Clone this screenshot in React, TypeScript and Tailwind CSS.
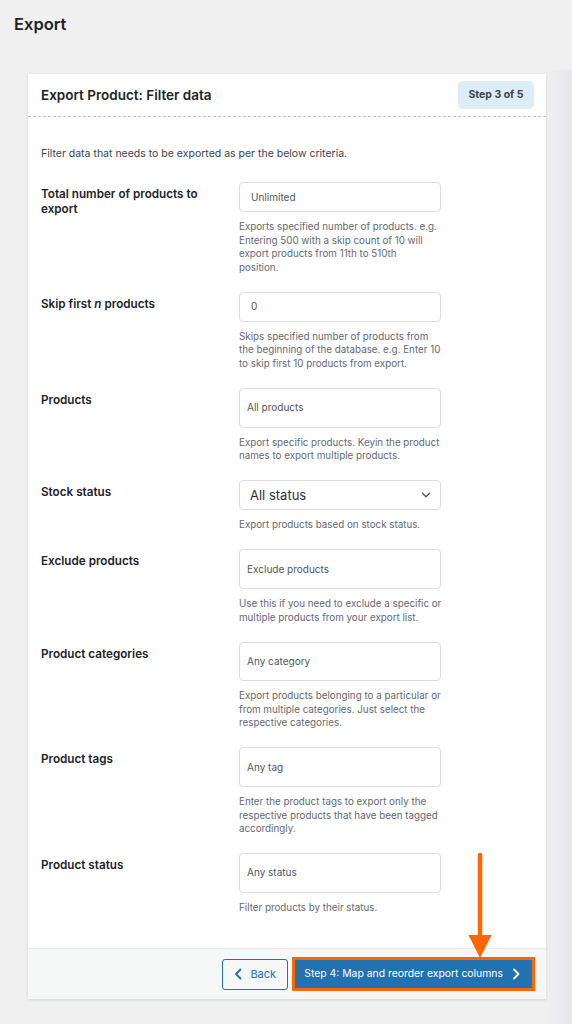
import React from "react";

type Row = {
  label: React.ReactNode;
  kind: "input" | "box" | "select";
  value: string;
  desc: string[];
};

const rows: Row[] = [
  {
    label: "Total number of products to export",
    kind: "input",
    value: "Unlimited",
    desc: [
      "Exports specified number of products. e.g.",
      "Entering 500 with a skip count of 10 will",
      "export products from 11th to 510th",
      "position.",
    ],
  },
  {
    label: (
      <>
        Skip first <em>n</em> products
      </>
    ),
    kind: "input",
    value: "0",
    desc: [
      "Skips specified number of products from",
      "the beginning of the database. e.g. Enter 10",
      "to skip first 10 products from export.",
    ],
  },
  {
    label: "Products",
    kind: "box",
    value: "All products",
    desc: ["Export specific products. Keyin the product", "names to export multiple products."],
  },
  {
    label: "Stock status",
    kind: "select",
    value: "All status",
    desc: ["Export products based on stock status."],
  },
  {
    label: "Exclude products",
    kind: "box",
    value: "Exclude products",
    desc: ["Use this if you need to exclude a specific or", "multiple products from your export list."],
  },
  {
    label: "Product categories",
    kind: "box",
    value: "Any category",
    desc: [
      "Export products belonging to a particular or",
      "from multiple categories. Just select the",
      "respective categories.",
    ],
  },
  {
    label: "Product tags",
    kind: "box",
    value: "Any tag",
    desc: [
      "Enter the product tags to export only the",
      "respective products that have been tagged",
      "accordingly.",
    ],
  },
  {
    label: "Product status",
    kind: "box",
    value: "Any status",
    desc: ["Filter products by their status."],
  },
];

function Field({ row }: { row: Row }) {
  if (row.kind === "select") {
    return (
      <div className="flex h-[30px] w-[202px] items-center justify-between rounded-[4px] border border-[#dcdcde] bg-white pl-[10px] pr-[9px]">
        <span className="text-[13px] text-[#2c3338]">{row.value}</span>
        <svg width="10" height="10" viewBox="0 0 10 10" fill="none">
          <path d="M1.5 3.2 5 6.7 8.5 3.2" stroke="#50575e" strokeWidth="1.3" strokeLinecap="round" strokeLinejoin="round" />
        </svg>
      </div>
    );
  }
  if (row.kind === "box") {
    return (
      <div className="flex h-[39.5px] w-[202px] items-center rounded-[4px] border border-[#dcdcde] bg-white pl-[7px]">
        <span className="text-[10px] text-[#50575e]">{row.value}</span>
      </div>
    );
  }
  return (
    <div className="flex h-[30px] w-[202px] items-center rounded-[4px] border border-[#dcdcde] bg-white pl-[11px]">
      <span className="text-[10px] text-[#50575e]">{row.value}</span>
    </div>
  );
}

export default function App() {
  return (
    <div
      className="flex min-h-[1024px] w-[572px] bg-[#f0f0f1]"
      style={{ fontFamily: "Inter, 'Noto Sans', sans-serif" }}
    >
      <div className="flex w-[548px] flex-col">
        <h1 className="pl-[14px] pt-[13px] text-[16.5px] font-semibold leading-[22px] text-[#1d2327]">Export</h1>

        <div className="ml-[28px] mt-[39px] w-[518px] bg-white shadow-[0_1px_3px_rgba(0,0,0,0.12)]">
          {/* header */}
          <div className="flex h-[43px] items-center justify-between border-b border-dashed border-[#c3c4c7] pl-[13px] pr-[12px]">
            <span className="text-[13.5px] font-semibold text-[#1d2327]">Export Product: Filter data</span>
            <span className="flex h-[28px] items-center rounded-[5px] bg-[#dcedf5] px-[10.5px] text-[10.5px] font-bold text-[#3c434a]">
              Step 3 of 5
            </span>
          </div>

          {/* body */}
          <div className="px-[13px] pb-[34px] pt-[30px]">
            <p className="text-[10.5px] leading-[14px] text-[#3c434a]">
              Filter data that needs to be exported as per the below criteria.
            </p>
            <div className="mt-[21px] flex flex-col gap-[17.5px]">
              {rows.map((row, i) => (
                <div key={i} className="flex">
                  <div className="w-[198px] pr-[26px] pt-[5px] text-[11.7px] font-semibold leading-[15px] text-[#1d2327]">
                    {row.label}
                  </div>
                  <div className="flex flex-col">
                    <Field row={row} />
                    <div className="mt-[8px] text-[9.8px] leading-[13.6px] text-[#646970]">
                      {row.desc.map((d, j) => (
                        <div key={j}>{d}</div>
                      ))}
                    </div>
                  </div>
                </div>
              ))}
            </div>
          </div>

          {/* footer */}
          <div className="relative flex h-[51px] items-center justify-end gap-[4px] border-t border-[#ececec] bg-[#f6f7f7] pr-[11px]">
            <button className="flex h-[31px] w-[66px] items-center justify-center gap-[7px] rounded-[3px] border border-[#2271b1] bg-[#f6f7f7] text-[11px] text-[#2271b1]">
              <svg width="9" height="12" viewBox="0 0 9 12" fill="none">
                <path d="M6.5 1.5 2 6l4.5 4.5" stroke="#2271b1" strokeWidth="1.8" strokeLinecap="round" strokeLinejoin="round" />
              </svg>
              Back
            </button>
            <div className="border-[3px] border-[#ff6600] bg-[#ff6600] p-0">
              <button className="flex h-[28px] items-center gap-[9px] bg-[#2271b1] pl-[9px] pr-[12px] text-[10.4px] text-white">
                Step 4: Map and reorder export columns
                <svg width="8" height="12" viewBox="0 0 8 12" fill="none">
                  <path d="M2 1.5 6.5 6 2 10.5" stroke="white" strokeWidth="1.8" strokeLinecap="round" strokeLinejoin="round" />
                </svg>
              </button>
            </div>
            {/* annotation arrow */}
            <svg className="absolute left-[440px] top-[-96px]" width="24" height="106" viewBox="0 0 24 106">
              <path d="M12 2 L12 84" stroke="#ff6600" strokeWidth="4.5" strokeLinecap="round" />
              <path d="M0.5 82 L23.5 82 L12 105 Z" fill="#ff6600" />
            </svg>
          </div>
        </div>
      </div>
      <div className="mt-[70px] w-[24px] bg-gradient-to-r from-[#efeff2] to-[#e6e6ee]" />
    </div>
  );
}
